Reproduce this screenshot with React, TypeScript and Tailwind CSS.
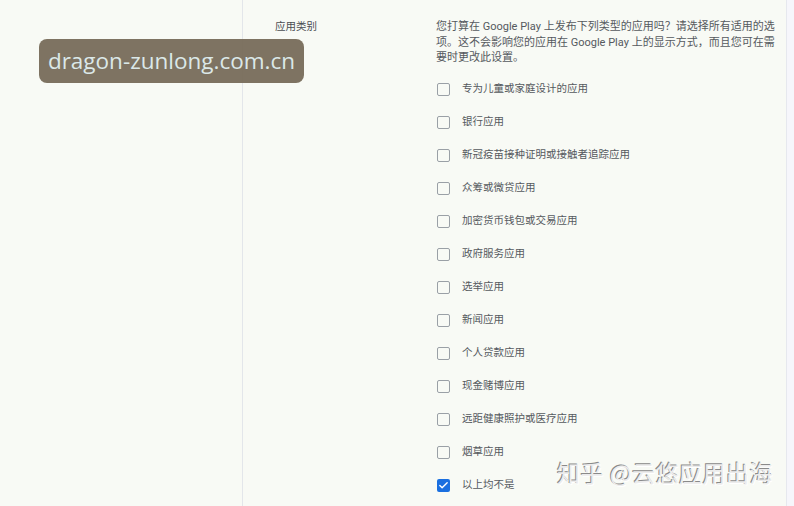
import { Check } from "lucide-react";

const categories = [
  "专为儿童或家庭设计的应用",
  "银行应用",
  "新冠疫苗接种证明或接触者追踪应用",
  "众筹或微贷应用",
  "加密货币钱包或交易应用",
  "政府服务应用",
  "选举应用",
  "新闻应用",
  "个人贷款应用",
  "现金赌博应用",
  "远距健康照护或医疗应用",
  "烟草应用",
  "以上均不是",
];

const cjk = "font-['Roboto','Noto_Sans_CJK_SC',sans-serif]";

function CheckRow({ label, checked }: { label: string; checked?: boolean }) {
  return (
    <label className="flex h-[33px] items-center gap-[12px]">
      {checked ? (
        <span className="flex h-[13px] w-[13px] items-center justify-center rounded-[2px] bg-[#1a6fe0]">
          <Check className="h-[11px] w-[11px] text-white" strokeWidth={3} />
        </span>
      ) : (
        <span className="h-[13px] w-[13px] rounded-[2px] border border-[#9aa0a6]" />
      )}
      <span className="text-[10.5px] text-[#55595e]">{label}</span>
    </label>
  );
}

export default function App() {
  return (
    <div className={`relative flex h-[506px] w-[794px] overflow-hidden bg-[#f8faf5] ${cjk}`}>
      <aside className="w-[243px] shrink-0 border-r border-[#e3e6ea]" />

      <main className="flex w-[544px] border-r border-[#e6e8ee] pt-[17px]">
        <div className="w-[193px] shrink-0 pl-[32px] pt-[2px] text-[10.5px] text-[#4a4d52]">应用类别</div>
        <div className="w-[330px] pt-[2px]">
          <p className="whitespace-nowrap text-[11px] leading-[15.5px] text-[#55595e]">
            您打算在 Google Play 上发布下列类型的应用吗？请选择所有适用的选
            <br />
            项。这不会影响您的应用在 Google Play 上的显示方式，而且您可在需
            <br />
            要时更改此设置。
          </p>
          <div className="mt-[7px] pl-[1px]">
            {categories.map((c, i) => (
              <CheckRow key={c} label={c} checked={i === categories.length - 1} />
            ))}
          </div>
        </div>
      </main>
      <div className="flex-1 bg-[#f6f6fb]" />

      {/* site stamp */}
      <div className="absolute left-[39px] top-[39px] flex h-[44px] w-[265px] items-center justify-center rounded-[8px] bg-[#776b5a]/95">
        <span className="font-['Open_Sans',sans-serif] text-[22.5px] text-[#dbe8e8]">dragon-zunlong.com.cn</span>
      </div>

      {/* author mark */}
      <div className="absolute left-[557px] top-[455px] font-['Noto_Sans_CJK_SC',sans-serif] text-[23px] tracking-[0.5px] text-[#ececec] [text-shadow:-1px_-1px_0_#8a8a8a,1px_1px_0_#ffffff]">
        知乎 @云悠应用出海
      </div>
    </div>
  );
}
